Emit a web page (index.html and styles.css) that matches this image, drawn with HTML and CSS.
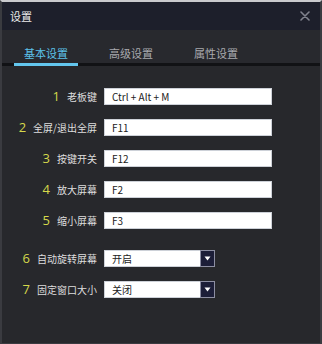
FILE: index.html
```html
<!DOCTYPE html>
<html lang="zh">
<head>
<meta charset="utf-8">
<link rel="stylesheet" href="styles.css">
</head>
<body>
<div class="window">
  <div class="titlebar">
    <span class="title">设置</span>
    <svg class="close" width="10" height="10" viewBox="0 0 10 10"><path d="M1 1L9 9M9 1L1 9" stroke="#80828e" stroke-width="1.6" stroke-linecap="round"/></svg>
  </div>
  <div class="tabs">
    <div class="tab active">基本设置</div>
    <div class="tab">高级设置</div>
    <div class="tab">属性设置</div>
  </div>
  <div class="form">
    <div class="row"><div class="lab"><span class="num">1</span><span class="txt">老板键</span></div><div class="field">Ctrl + Alt + M</div></div>
    <div class="row"><div class="lab"><span class="num">2</span><span class="txt">全屏/退出全屏</span></div><div class="field">F11</div></div>
    <div class="row"><div class="lab"><span class="num">3</span><span class="txt">按键开关</span></div><div class="field">F12</div></div>
    <div class="row"><div class="lab"><span class="num">4</span><span class="txt">放大屏幕</span></div><div class="field">F2</div></div>
    <div class="row"><div class="lab"><span class="num">5</span><span class="txt">缩小屏幕</span></div><div class="field">F3</div></div>
    <div class="row sel-first"><div class="lab"><span class="num">6</span><span class="txt">自动旋转屏幕</span></div><div class="select"><span class="val">开启</span><span class="btn"><svg width="7" height="5" viewBox="0 0 7 5"><path d="M0.5 0.5H6.5L3.5 4.5Z" fill="#ffffff"/></svg></span></div></div>
    <div class="row"><div class="lab"><span class="num">7</span><span class="txt">固定窗口大小</span></div><div class="select"><span class="val">关闭</span><span class="btn"><svg width="7" height="5" viewBox="0 0 7 5"><path d="M0.5 0.5H6.5L3.5 4.5Z" fill="#ffffff"/></svg></span></div></div>
  </div>
</div>
</body>
</html>
```

FILE: styles.css
```css
html, body {
  margin: 0;
  padding: 0;
  background: #27282c;
}
body {
  font-family: "Noto Sans CJK SC", "Noto Sans", sans-serif;
}
.window {
  width: 322px;
  height: 344px;
  box-sizing: border-box;
  background: #27282c;
  border-top: 2px solid #c9cacd;
  border-left: 2px solid #3a3b40;
  border-right: 2px solid #3a3b40;
  border-bottom: 1px solid #3a3b40;
  overflow: hidden;
}
.titlebar {
  height: 28px;
  background: #1d1f2b;
  display: flex;
  align-items: center;
  justify-content: space-between;
  padding: 0 10px 0 8px;
}
.title {
  color: #ececec;
  font-size: 11px;
  line-height: 14px;
}
.close {
  display: block;
}
.tabs {
  display: flex;
  gap: 21px;
  padding-left: 12px;
  height: 33px;
  border-bottom: 3px solid #111215;
  background: #28292e;
}
.tab {
  width: 64px;
  box-sizing: border-box;
  height: 36px;
  padding-top: 16px;
  text-align: center;
  font-size: 11px;
  line-height: 14px;
  color: #a9aaae;
  border-bottom: 3px solid transparent;
}
.tab.active {
  color: #5cc2ea;
  border-bottom-color: #63c6ee;
}
.form {
  padding-top: 22px;
  display: flex;
  flex-direction: column;
  gap: 14px;
}
.row {
  display: flex;
  align-items: center;
  height: 17px;
}
.row.sel-first {
  margin-top: 7px;
}
.lab {
  width: 95px;
  display: flex;
  justify-content: flex-end;
  align-items: center;
  gap: 7px;
  margin-right: 7px;
}
.num {
  font-family: "Open Sans", "Noto Sans", sans-serif;
  font-size: 13px;
  line-height: 17px;
  color: #d5d94b;
}
.txt {
  font-size: 10px;
  line-height: 17px;
  color: #dedede;
}
.field {
  width: 168px;
  height: 17px;
  box-sizing: border-box;
  background: #ffffff;
  border: 1px solid #cdd1d8;
  padding-left: 7px;
  font-size: 10px;
  line-height: 15px;
  color: #222222;
}
.select {
  width: 111px;
  height: 17px;
  box-sizing: border-box;
  background: #ffffff;
  border: 1px solid #cdd1d8;
  display: flex;
  align-items: stretch;
  justify-content: space-between;
}
.val {
  padding-left: 7px;
  font-size: 10px;
  line-height: 15px;
  color: #222222;
}
.btn {
  width: 15px;
  box-sizing: border-box;
  background: #1c1e38;
  border: 1px solid #8c8ea2;
  margin: -1px -1px -1px 0;
  display: flex;
  align-items: center;
  justify-content: center;
}
.btn svg {
  display: block;
}
```
